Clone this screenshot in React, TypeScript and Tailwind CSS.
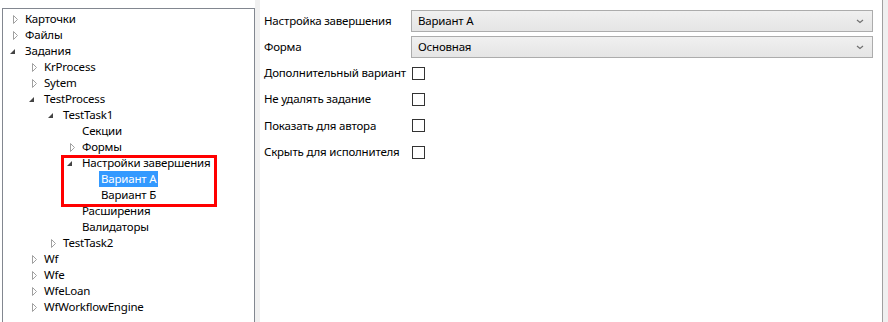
import React from "react";

type Node = { t: string; l: number; s: "c" | "e" | "n"; sel?: boolean };

const nodes: Node[] = [
  { t: "Карточки", l: 0, s: "c" },
  { t: "Файлы", l: 0, s: "c" },
  { t: "Задания", l: 0, s: "e" },
  { t: "KrProcess", l: 1, s: "c" },
  { t: "Sytem", l: 1, s: "c" },
  { t: "TestProcess", l: 1, s: "e" },
  { t: "TestTask1", l: 2, s: "e" },
  { t: "Секции", l: 3, s: "n" },
  { t: "Формы", l: 3, s: "c" },
  { t: "Настройки завершения", l: 3, s: "e" },
  { t: "Вариант А", l: 4, s: "n", sel: true },
  { t: "Вариант Б", l: 4, s: "n" },
  { t: "Расширения", l: 3, s: "n" },
  { t: "Валидаторы", l: 3, s: "n" },
  { t: "TestTask2", l: 2, s: "c" },
  { t: "Wf", l: 1, s: "c" },
  { t: "Wfe", l: 1, s: "c" },
  { t: "WfeLoan", l: 1, s: "c" },
  { t: "WfWorkflowEngine", l: 1, s: "c" },
];

const pads = ["pl-[2px]", "pl-[21px]", "pl-[40px]", "pl-[59px]", "pl-[78px]"];

function Toggle({ s }: { s: Node["s"] }) {
  if (s === "c")
    return (
      <div className="w-[19px] h-[16px] flex items-center pl-[8px]">
        <svg width="6" height="9" viewBox="0 0 6 9">
          <polygon points="0.5,0.5 4.5,4.5 0.5,8.5" fill="#fff" stroke="#a0a0a0" strokeWidth="1" />
        </svg>
      </div>
    );
  if (s === "e")
    return (
      <div className="w-[19px] h-[16px] flex items-center pl-[5px] pt-[2px]">
        <svg width="6" height="6" viewBox="0 0 6 6">
          <polygon points="5,0 5,5 0,5" fill="#444" />
        </svg>
      </div>
    );
  return <div className="w-[19px] h-[16px]" />;
}

function Chevron() {
  return (
    <svg width="8" height="5" viewBox="0 0 8 5" className="mr-[8px]">
      <path d="M1 1 L4 3.5 L7 1" fill="none" stroke="#707070" strokeWidth="1.2" />
    </svg>
  );
}

function Combo({ label, value }: { label: string; value: string }) {
  return (
    <div className="flex items-center h-[22px]">
      <div className="w-[151px] pl-[4px] whitespace-nowrap">{label}</div>
      <div className="w-[462px] h-[22px] border border-[#acacac] bg-gradient-to-b from-[#f0f0f0] to-[#e5e5e5] flex items-center justify-between pl-[6px]">
        <span>{value}</span>
        <Chevron />
      </div>
    </div>
  );
}

function Check({ label, h }: { label: string; h: string }) {
  return (
    <div className={`flex items-center ${h}`}>
      <div className="w-[152px] pl-[4px] whitespace-nowrap">{label}</div>
      <div className="w-[13px] h-[13px] border border-[#333] bg-white" />
    </div>
  );
}

export default function App() {
  return (
    <div
      className="relative w-[888px] h-[322px] bg-white flex overflow-hidden text-[11.5px] tracking-[-0.2px] text-black"
      style={{ fontFamily: '"Noto Sans", "Open Sans", sans-serif' }}
    >
      <div className="w-[255px] h-full pt-[8px] pl-[2px]">
        <div className="h-[400px] border border-[#828790] bg-white pt-[2px]">
          {nodes.map((n, i) => (
            <div key={i} className={`flex items-center h-[16px] ${pads[n.l]}`}>
              <Toggle s={n.s} />
              <span
                className={`ml-[-1px] px-[2px] h-[16px] leading-[16px] whitespace-nowrap ${
                  n.sel ? "bg-[#3399ff] text-white" : ""
                }`}
              >
                {n.t}
              </span>
            </div>
          ))}
        </div>
      </div>
      <div className="w-[5px] h-full bg-[#f0f0f0]" />
      <div className="flex-1 h-full pt-[10px] flex flex-col">
        <div className="flex flex-col gap-[4px]">
          <Combo label="Настройка завершения" value="Вариант А" />
          <Combo label="Форма" value="Основная" />
        </div>
        <div className="mt-[2px] flex flex-col">
          <Check label="Дополнительный вариант" h="h-[26px]" />
          <Check label="Не удалять задание" h="h-[26px]" />
          <Check label="Показать для автора" h="h-[27px]" />
          <Check label="Скрыть для исполнителя" h="h-[26px]" />
        </div>
      </div>
      <div className="w-[1px] h-full bg-[#a0a0a0]" />
      <div className="w-[5px] h-full bg-[#f0f0f0]" />
      <div className="absolute left-[61px] top-[155px] w-[156px] h-[52px] border-[3px] border-[#ff0000]" />
    </div>
  );
}
